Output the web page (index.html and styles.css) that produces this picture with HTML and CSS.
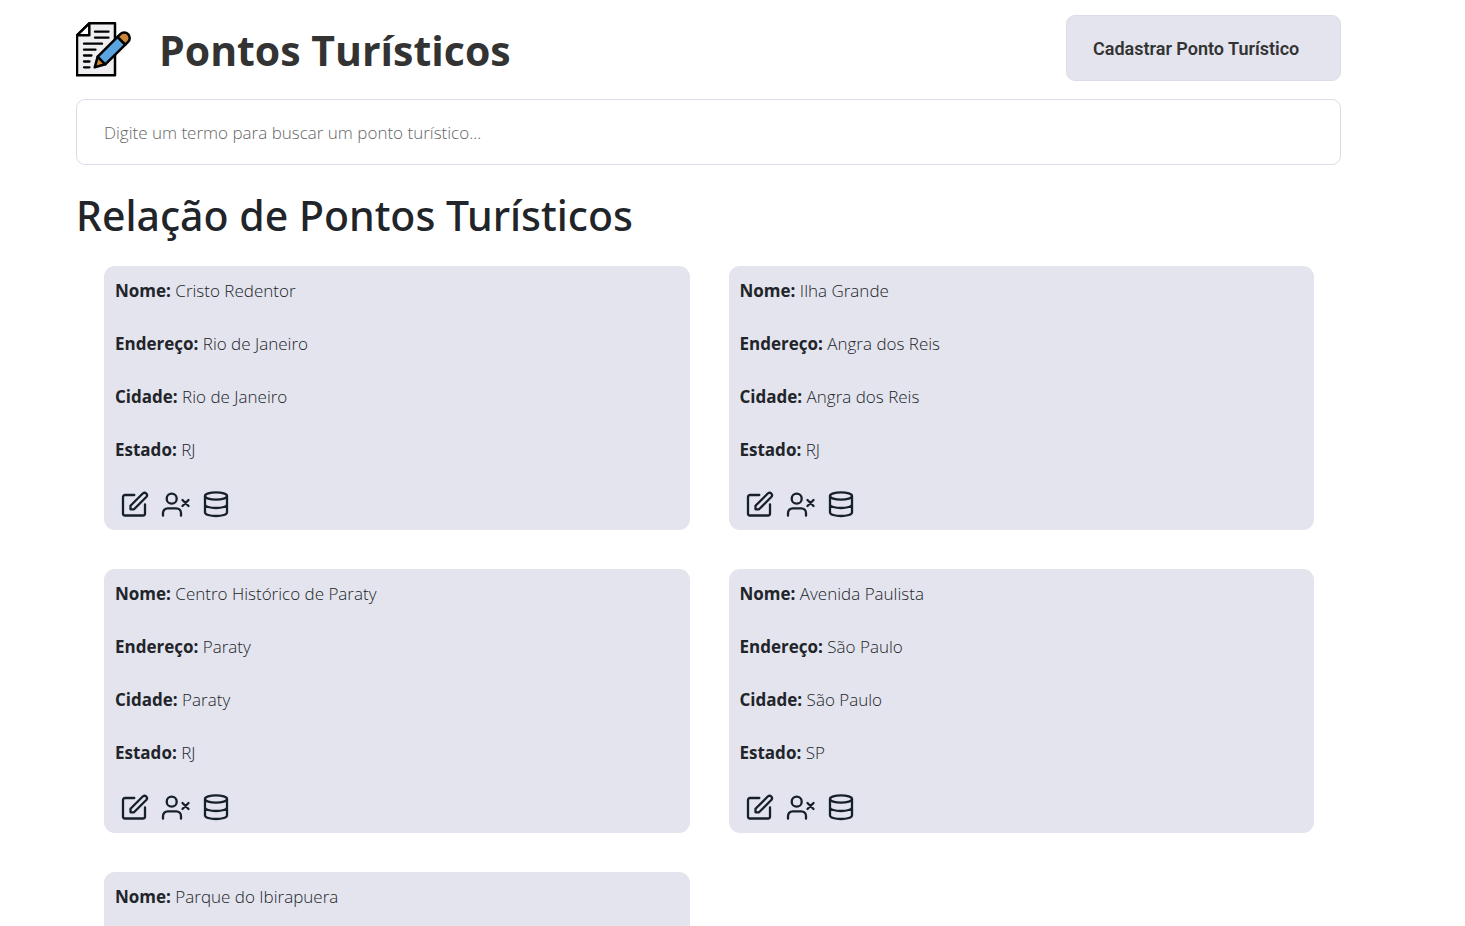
FILE: index.html
```html
<!DOCTYPE html>
<html lang="pt-BR">
<head>
<meta charset="utf-8">
<meta name="viewport" content="width=device-width, initial-scale=1">
<title>Pontos Turísticos</title>
<link rel="stylesheet" href="styles.css">
</head>
<body>
<svg class="sprite" aria-hidden="true">
  <symbol id="edit" viewBox="0 0 30 30">
    <path d="M14.300 5H5a2 2 0 0 0-2 2v16.500a2 2 0 0 0 2 2h18a2 2 0 0 0 2-2V14.500"/>
    <path d="M10.500 19.300v-3.500L23 3.300a2.500 2.500 0 0 1 3.500 3.500L14 19.300z"/>
  </symbol>
  <symbol id="user" viewBox="0 0 30 30">
    <circle cx="10.700" cy="8.700" r="5"/>
    <path d="M2 25.700V23a4.700 4.700 0 0 1 4.700-4.700h8.600A4.700 4.700 0 0 1 20 23v2.700M21.500 10l6 6M27.500 10l-6 6"/>
  </symbol>
  <symbol id="data" viewBox="0 0 30 30">
    <ellipse cx="14" cy="6" rx="11" ry="3.700"/>
    <path d="M3 6v16.500c0 2 5 3.500 11 3.500s11-1.500 11-3.500V6M3 14.500C3 16.500 8 18 14 18s11-1.500 11-3.500"/>
  </symbol>
</svg>
<main class="page">
  <header class="header">
    <div class="brand">
      <svg class="logo" viewBox="0 0 56 56" aria-hidden="true">
        <path class="paper" d="M13.300 1.300H39v52H1v-40z"/>
        <path class="fold" d="M13.300 1.300v12H1z"/>
        <path class="lines" d="M19 9.700h13.500M19 15.700h13.500M8 21.700h18M8 27.700h11.500M8 33.500h7.500M8 39.500h5.500M8 45.300h5.500"/>
        <path class="tip" d="M18.700 45.300l3-10.600 7.600 7.600z"/>
        <path class="body" d="M21.700 34.700l19.800-19.800 7.800 7.800-20 19.600z"/>
        <path class="eraser" d="M41.500 14.900l2.800-2.800a5.500 5.500 0 0 1 7.800 7.800l-2.800 2.800z"/>
      </svg>
      <h1 class="title">Pontos Turísticos</h1>
    </div>
    <button class="add" type="button">Cadastrar Ponto Turístico</button>
  </header>
  <input class="search" type="search" aria-label="Buscar ponto turístico" placeholder="Digite um termo para buscar um ponto turístico...">
  <h2 class="subtitle">Relação de Pontos Turísticos</h2>
  <section class="grid">
    <article class="card">
      <p><strong>Nome:</strong> Cristo Redentor</p>
      <p><strong>Endereço:</strong> Rio de Janeiro</p>
      <p><strong>Cidade:</strong> Rio de Janeiro</p>
      <p><strong>Estado:</strong> RJ</p>
      <div class="actions">
        <button type="button" aria-label="Editar"><svg><use href="#edit"/></svg></button>
        <button type="button" aria-label="Excluir"><svg><use href="#user"/></svg></button>
        <button type="button" aria-label="Detalhes"><svg><use href="#data"/></svg></button>
      </div>
    </article>
    <article class="card">
      <p><strong>Nome:</strong> Ilha Grande</p>
      <p><strong>Endereço:</strong> Angra dos Reis</p>
      <p><strong>Cidade:</strong> Angra dos Reis</p>
      <p><strong>Estado:</strong> RJ</p>
      <div class="actions">
        <button type="button" aria-label="Editar"><svg><use href="#edit"/></svg></button>
        <button type="button" aria-label="Excluir"><svg><use href="#user"/></svg></button>
        <button type="button" aria-label="Detalhes"><svg><use href="#data"/></svg></button>
      </div>
    </article>
    <article class="card">
      <p><strong>Nome:</strong> Centro Histórico de Paraty</p>
      <p><strong>Endereço:</strong> Paraty</p>
      <p><strong>Cidade:</strong> Paraty</p>
      <p><strong>Estado:</strong> RJ</p>
      <div class="actions">
        <button type="button" aria-label="Editar"><svg><use href="#edit"/></svg></button>
        <button type="button" aria-label="Excluir"><svg><use href="#user"/></svg></button>
        <button type="button" aria-label="Detalhes"><svg><use href="#data"/></svg></button>
      </div>
    </article>
    <article class="card">
      <p><strong>Nome:</strong> Avenida Paulista</p>
      <p><strong>Endereço:</strong> São Paulo</p>
      <p><strong>Cidade:</strong> São Paulo</p>
      <p><strong>Estado:</strong> SP</p>
      <div class="actions">
        <button type="button" aria-label="Editar"><svg><use href="#edit"/></svg></button>
        <button type="button" aria-label="Excluir"><svg><use href="#user"/></svg></button>
        <button type="button" aria-label="Detalhes"><svg><use href="#data"/></svg></button>
      </div>
    </article>
    <article class="card">
      <p><strong>Nome:</strong> Parque do Ibirapuera</p>
    </article>
  </section>
</main>
</body>
</html>
```
FILE: styles.css
```css
* { box-sizing: border-box; }
body {
  margin: 0;
  height: 100vh;
  overflow: hidden;
  background: #fff;
  color: #212529;
  font: 300 17px/26px "Segoe UI", "Open Sans", "Noto Sans", sans-serif;
}
.sprite { display: none; }
.page { padding: 15px 124px 0 76px; }
.header { display: flex; justify-content: space-between; align-items: flex-start; }
.brand { display: flex; align-items: center; gap: 27px; padding-top: 2px; }
.logo { width: 56px; height: 56px; stroke: #000; stroke-width: 2.500; stroke-linejoin: round; stroke-linecap: round; }
.paper { fill: #efeff1; }
.fold { fill: #fff; }
.lines { fill: none; stroke-width: 2.300; }
.tip { fill: #c98a3c; }
.body { fill: #5aa5e0; }
.eraser { fill: #cb8737; }
.title { margin: 0; color: #333; font-size: 41px; font-weight: 700; line-height: 66px; }
.add {
  width: 275px;
  height: 66px;
  padding: 2px 26px 0;
  border: 1px solid #dcdce8;
  border-radius: 9px;
  background: #e4e4ee;
  color: #333;
  font: 600 18px/26px Roboto, sans-serif;
  text-align: left;
}
.search {
  display: block;
  width: 100%;
  height: 66px;
  margin-top: 16px;
  padding: 0 27px;
  border: 1px solid #dcdce8;
  border-radius: 9px;
  background: #fff;
  color: #333;
  font: inherit;
  appearance: none;
}
.search::placeholder { color: #666; opacity: 1; }
.subtitle { margin: 24px 0; font-family: "Segoe UI", "Noto Sans", sans-serif; font-size: 41px; font-weight: 500; line-height: 53px; }
.grid { display: grid; grid-template-columns: 1fr 1fr; gap: 39px; padding: 0 27px 0 28px; }
.card { min-height: 264px; padding: 12px 11px 10px; border-radius: 11px; background: #e4e4ee; }
.card p { margin: 0 0 27px; }
.card strong { font-weight: 700; }
.actions { display: flex; gap: 11px; padding-left: 5px; }
.actions button { display: flex; width: 30px; height: 30px; padding: 0; border: 0; background: none; color: #16202a; }
.actions svg { width: 30px; height: 30px; fill: none; stroke: currentColor; stroke-width: 2.300; stroke-linecap: round; stroke-linejoin: round; }
```
